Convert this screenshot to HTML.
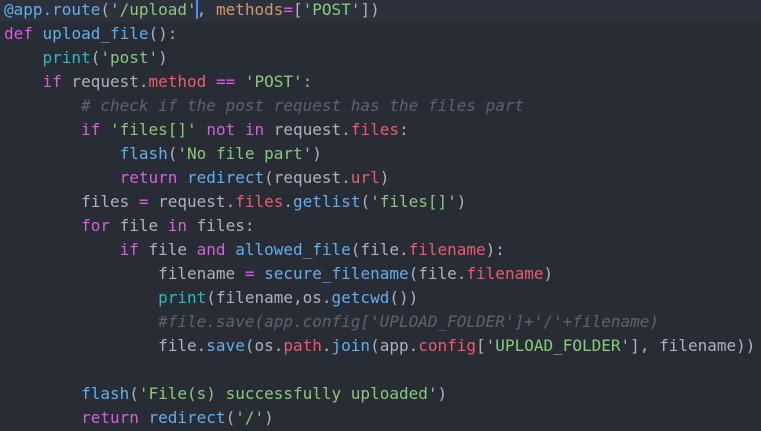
<!DOCTYPE html>
<html><head><style>
body{margin:0;background:#282c34;width:761px;height:431px;overflow:hidden}
pre{margin:0;padding:0 0 0 4px;position:relative;top:-2px;font-family:"DejaVu Sans Mono","Liberation Mono",monospace;font-size:16px;line-height:24px;color:#abb2bf}
.hl{position:absolute;left:0;top:0;width:761px;height:22px;background:#2c313c}
.k{color:#d55fde}.f{color:#61afef}.b{color:#2bbac5}.p{color:#ef596f}.s{color:#89ca78}.c{color:#5c6370;font-style:italic}.o{color:#d19a66}
.cur{display:inline-block;width:2px;height:20px;background:#528bff;vertical-align:-4px;margin:0 -1px}
</style></head><body>
<div class="hl"></div>
<pre><span class="f">@app.route</span>(<span class="s">'/upload'</span><span class="cur"></span>, <span class="o">methods</span><span class="k">=</span>[<span class="s">'POST'</span>])
<span class="k">def</span> <span class="f">upload_file</span>():
    <span class="b">print</span>(<span class="s">'post'</span>)
    <span class="k">if</span> request.<span class="p">method</span> <span class="k">==</span> <span class="s">'POST'</span>:
        <span class="c"># check if the post request has the files part</span>
        <span class="k">if</span> <span class="s">'files[]'</span> <span class="k">not in</span> request.<span class="p">files</span>:
            <span class="f">flash</span>(<span class="s">'No file part'</span>)
            <span class="k">return</span> <span class="f">redirect</span>(request.<span class="p">url</span>)
        files <span class="k">=</span> request.<span class="p">files</span>.<span class="f">getlist</span>(<span class="s">'files[]'</span>)
        <span class="k">for</span> file <span class="k">in</span> files:
            <span class="k">if</span> file <span class="k">and</span> <span class="f">allowed_file</span>(file.<span class="p">filename</span>):
                filename <span class="k">=</span> <span class="f">secure_filename</span>(file.<span class="p">filename</span>)
                <span class="b">print</span>(filename,os.<span class="f">getcwd</span>())
                <span class="c">#file.save(app.config['UPLOAD_FOLDER']+'/'+filename)</span>
                file.<span class="f">save</span>(os.<span class="p">path</span>.<span class="f">join</span>(app.<span class="p">config</span>[<span class="s">'UPLOAD_FOLDER'</span>], filename))

        <span class="f">flash</span>(<span class="s">'File(s) successfully uploaded'</span>)
        <span class="k">return</span> <span class="f">redirect</span>(<span class="s">'/'</span>)
</pre>
</body></html>
